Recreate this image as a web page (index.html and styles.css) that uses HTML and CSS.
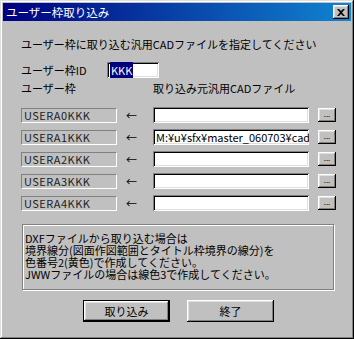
FILE: index.html
```html
<!DOCTYPE html>
<html lang="ja">
<head>
  <meta charset="UTF-8">
  <title>ユーザー枠取り込み</title>
  <link rel="stylesheet" href="styles.css">
</head>
<body>
  <div class="window">
    <div class="titlebar">
      <span class="title">ユーザー枠取り込み</span>
      <span class="close">
        <svg width="8" height="7" viewBox="0 0 8 7"><path d="M0 0h2l2 2 2-2h2L5 3.5 8 7H6L4 5 2 7H0l3-3.5z" fill="#000"/></svg>
      </span>
    </div>

    <div class="content">
      <p class="intro">ユーザー枠に取り込む汎用CADファイルを指定してください</p>

      <div class="id-row">
        <span class="id-label">ユーザー枠ID</span>
        <span class="field id-field"><span class="selected">KKK</span></span>
      </div>

      <div class="heads">
        <span class="head-user">ユーザー枠</span>
        <span>取り込み元汎用CADファイル</span>
      </div>

      <div class="rows">
        <div class="row">
          <span class="user-box">USERA0KKK</span>
          <span class="arrow">←</span>
          <span class="field"></span>
          <span class="browse">...</span>
        </div>
        <div class="row">
          <span class="user-box">USERA1KKK</span>
          <span class="arrow">←</span>
          <span class="field">M:¥u¥sfx¥master_060703¥cad¥</span>
          <span class="browse">...</span>
        </div>
        <div class="row">
          <span class="user-box">USERA2KKK</span>
          <span class="arrow">←</span>
          <span class="field"></span>
          <span class="browse">...</span>
        </div>
        <div class="row">
          <span class="user-box">USERA3KKK</span>
          <span class="arrow">←</span>
          <span class="field"></span>
          <span class="browse">...</span>
        </div>
        <div class="row">
          <span class="user-box">USERA4KKK</span>
          <span class="arrow">←</span>
          <span class="field"></span>
          <span class="browse">...</span>
        </div>
      </div>

      <div class="note">
        DXFファイルから取り込む場合は<br>
        境界線分(図面作図範囲とタイトル枠境界の線分)を<br>
        色番号2(黄色)で作成してください。<br>
        JWWファイルの場合は線色3で作成してください。
      </div>

      <div class="actions">
        <span class="btn default">取り込み</span>
        <span class="btn">終了</span>
      </div>
    </div>
  </div>
</body>
</html>
```

FILE: styles.css
```css
:root {
  --face: #c0c0c0;
  --shadow: #808080;
  --dark: #000;
  --light: #dfdfdf;
  --raised: inset -1px -1px #000, inset 1px 1px #fff, inset -2px -2px #808080, inset 2px 2px #dfdfdf;
  --sunken: inset 1px 1px #808080, inset -1px -1px #fff, inset 2px 2px #000, inset -2px -2px #dfdfdf;
}
html, body {
  margin: 0;
  padding: 0;
  background: var(--face);
  font-family: "Noto Sans CJK JP", sans-serif;
  font-size: 11px;
  color: #000;
}

.window {
  width: 354px;
  height: 339px;
  box-sizing: border-box;
  padding: 3px;
  background: var(--face);
  box-shadow: inset -1px -1px #000, inset 1px 1px #dfdfdf, inset -2px -2px #808080, inset 2px 2px #fff;
  display: flex;
  flex-direction: column;
}

/* タイトルバー */
.titlebar {
  height: 18px;
  display: flex;
  align-items: center;
  padding: 0 2px 0 3px;
  background: linear-gradient(to right, #000080, #1084d0);
  color: #fff;
  font-size: 11.5px;
}
.close {
  margin-left: auto;
  width: 16px;
  height: 14px;
  background: var(--face);
  box-shadow: var(--raised);
  display: flex;
  align-items: center;
  justify-content: center;
}

.content {
  padding-left: 18px;
  display: flex;
  flex-direction: column;
}
.intro {
  margin: 16px 0 0 0;
  line-height: 14px;
}

.id-row {
  margin-top: 11px;
  height: 16px;
  display: flex;
  align-items: center;
}
.id-label {
  width: 86px;
  line-height: 14px;
}
.field {
  box-sizing: border-box;
  height: 16px;
  background: #fff;
  box-shadow: var(--sunken);
  padding: 2px 2px 0 3px;
  line-height: 12px;
  white-space: nowrap;
  overflow: hidden;
}
.id-field {
  width: 52px;
}
.selected {
  background: #000080;
  color: #fff;
  padding: 0 1px;
}

.heads {
  margin-top: 3px;
  line-height: 14px;
  display: flex;
}
.head-user {
  width: 132px;
}

.rows {
  margin-top: 12px;
  display: flex;
  flex-direction: column;
  gap: 6px;
}
.row {
  height: 16px;
  display: grid;
  grid-template-columns: 96px 36px 156px 18px;
  column-gap: 0;
  align-items: center;
}
.row .field {
  margin-right: 9px;
  width: 156px;
}
.row .browse {
  margin-left: 9px;
}
.user-box {
  box-sizing: border-box;
  height: 15px;
  border-top: 1px solid var(--shadow);
  border-left: 1px solid var(--shadow);
  border-bottom: 1px solid #fff;
  border-right: 1px solid #fff;
  padding-left: 2px;
  line-height: 13px;
  color: #202020;
  letter-spacing: 0.5px;
}
.arrow {
  padding-left: 9px;
  line-height: 14px;
}
.browse {
  width: 18px;
  height: 14px;
  box-sizing: border-box;
  background: var(--face);
  box-shadow: var(--raised);
  font-size: 8px;
  line-height: 12px;
  text-align: center;
}

/* 注意書き */
.note {
  margin: 13px 0 0 1px;
  width: 312px;
  height: 66px;
  box-sizing: border-box;
  border: 1px solid var(--shadow);
  box-shadow: inset 1px 1px #fff, 1px 1px #fff;
  padding: 7px 0 0 2px;
  line-height: 12px;
}

.actions {
  margin: 10px 0 0 62px;
  display: flex;
  gap: 17px;
}
.btn {
  box-sizing: border-box;
  width: 87px;
  height: 22px;
  background: var(--face);
  box-shadow: var(--raised);
  display: flex;
  align-items: center;
  justify-content: center;
}
.btn.default {
  border: 1px solid #000;
  box-shadow: inset -1px -1px #000, inset 1px 1px #fff, inset -2px -2px #808080, inset 2px 2px #dfdfdf;
}
```
